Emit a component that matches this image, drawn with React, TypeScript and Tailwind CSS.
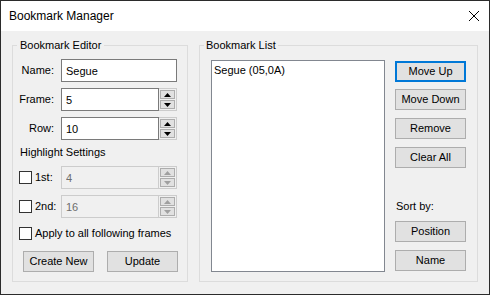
import React, { useState } from 'react';

const font = { fontFamily: '"Liberation Sans", Arial, sans-serif' };

const Arrow = ({ up, disabled }: { up?: boolean; disabled?: boolean }) => (
  <svg width="7" height="4" viewBox="0 0 7 4">
    <polygon
      points={up ? '3.5,0 7,4 0,4' : '0,0 7,0 3.5,4'}
      fill={disabled ? '#a0a0a0' : '#000'}
    />
  </svg>
);

const Spin = ({ disabled }: { disabled?: boolean }) => (
  <div className="w-[18px] h-[23px] flex flex-col gap-[1px] p-[1px] border border-l-0 border-[#cccccc]">
    <div className="flex-1 flex items-center justify-center bg-[#e1e1e1] border border-[#adadad]">
      <Arrow up disabled={disabled} />
    </div>
    <div className="flex-1 flex items-center justify-center bg-[#e1e1e1] border border-[#adadad]">
      <Arrow disabled={disabled} />
    </div>
  </div>
);

const Btn = ({ label, primary }: { label: string; primary?: boolean }) => (
  <button
    className={
      primary
        ? 'w-[71px] h-[21px] bg-[#e1e1e1] border-2 border-[#0078d7] text-[11px] text-black leading-none'
        : 'w-[71px] h-[21px] bg-[#e1e1e1] border border-[#adadad] text-[11px] text-black leading-none'
    }
  >
    {label}
  </button>
);

const CheckBox = ({ checked, onClick }: { checked: boolean; onClick: () => void }) => (
  <div
    onClick={onClick}
    className="w-[13px] h-[13px] bg-white border border-[#333333] flex items-center justify-center"
  >
    {checked && (
      <svg width="9" height="9" viewBox="0 0 9 9">
        <path d="M1 4.5 L3.5 7 L8 1.5" stroke="#000" strokeWidth="1.3" fill="none" />
      </svg>
    )}
  </div>
);

export default function App() {
  const [first, setFirst] = useState(false);
  const [second, setSecond] = useState(false);
  const [applyAll, setApplyAll] = useState(false);

  return (
    <div style={font} className="w-[490px] h-[295px] border border-[#2b2b2b] bg-[#f0f0f0] flex flex-col text-black">
      {/* title bar */}
      <div className="h-[30px] bg-white flex items-center justify-between">
        <span className="text-[12px] pl-[8px]">Bookmark Manager</span>
        <svg width="10" height="10" viewBox="0 0 10 10" className="mr-[10px]">
          <path d="M0 0 L10 10 M10 0 L0 10" stroke="#000" strokeWidth="1" />
        </svg>
      </div>

      <div className="flex gap-[11px] pl-[11px] pt-[6px] text-[11px]">
        {/* editor */}
        <fieldset className="w-[176px] h-[245px] border border-[#dcdcdc] flex flex-col">
          <legend className="ml-[4px] px-[3px] leading-[16px]">Bookmark Editor</legend>

          <div className="flex items-center mt-[6px]">
            <span className="w-[41px] text-right">Name:</span>
            <input
              className="ml-[7px] w-[116px] h-[23px] border border-[#7a7a7a] bg-white px-[4px] outline-none"
              defaultValue="Segue"
            />
          </div>
          <div className="flex items-center mt-[6px]">
            <span className="w-[41px] text-right">Frame:</span>
            <input
              className="ml-[7px] w-[98px] h-[23px] border border-[#7a7a7a] bg-white px-[4px] outline-none"
              defaultValue="5"
            />
            <Spin />
          </div>
          <div className="flex items-center mt-[6px]">
            <span className="w-[41px] text-right">Row:</span>
            <input
              className="ml-[7px] w-[98px] h-[23px] border border-[#7a7a7a] bg-white px-[4px] outline-none"
              defaultValue="10"
            />
            <Spin />
          </div>

          <div className="mt-[4px] ml-[7px] leading-[16px]">Highlight Settings</div>

          <div className="flex items-center mt-[6px]">
            <div className="ml-[6px]">
              <CheckBox checked={first} onClick={() => setFirst(!first)} />
            </div>
            <span className="ml-[3px] w-[26px]">1st:</span>
            <input
              disabled
              className="w-[98px] h-[23px] border border-[#cccccc] bg-[#f0f0f0] text-[#6d6d6d] px-[4px]"
              defaultValue="4"
            />
            <Spin disabled />
          </div>
          <div className="flex items-center mt-[6px]">
            <div className="ml-[6px]">
              <CheckBox checked={second} onClick={() => setSecond(!second)} />
            </div>
            <span className="ml-[3px] w-[26px]">2nd:</span>
            <input
              disabled
              className="w-[98px] h-[23px] border border-[#cccccc] bg-[#f0f0f0] text-[#6d6d6d] px-[4px]"
              defaultValue="16"
            />
            <Spin disabled />
          </div>

          <div className="flex items-center mt-[9px] h-[13px]">
            <div className="ml-[6px]">
              <CheckBox checked={applyAll} onClick={() => setApplyAll(!applyAll)} />
            </div>
            <span className="ml-[3px]">Apply to all following frames</span>
          </div>

          <div className="flex gap-[13px] ml-[10px] mt-[11px]">
            <Btn label="Create New" />
            <Btn label="Update" />
          </div>
        </fieldset>

        {/* list */}
        <fieldset className="w-[279px] h-[245px] border border-[#dcdcdc] flex">
          <legend className="ml-[4px] px-[2px] leading-[16px]">Bookmark List</legend>
          <div className="ml-[11px] mt-[7px] w-[174px] h-[212px] bg-white border border-[#828790] px-[2px] pt-[2px]">
            <div className="leading-[14px]">Segue (05,0A)</div>
          </div>
          <div className="ml-[10px] mt-[8px] flex flex-col">
            <Btn label="Move Up" primary />
            <div className="mt-[7px]">
              <Btn label="Move Down" />
            </div>
            <div className="mt-[8px]">
              <Btn label="Remove" />
            </div>
            <div className="mt-[8px]">
              <Btn label="Clear All" />
            </div>
            <div className="mt-[30px] ml-[1px] leading-[16px]">Sort by:</div>
            <div className="mt-[7px]">
              <Btn label="Position" />
            </div>
            <div className="mt-[8px]">
              <Btn label="Name" />
            </div>
          </div>
        </fieldset>
      </div>
    </div>
  );
}
